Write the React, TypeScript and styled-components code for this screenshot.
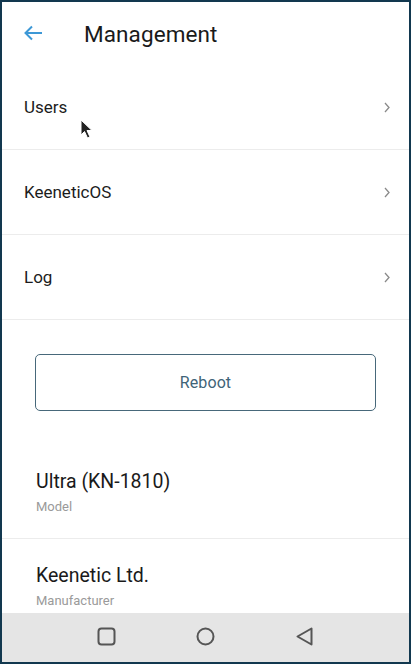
import React from 'react'
import styled, { createGlobalStyle } from 'styled-components'

const GlobalStyle = createGlobalStyle`
  html, body {
    margin: 0;
    padding: 0;
    background: #12384f;
  }
  body {
    font-family: Roboto, "Noto Sans", "Liberation Sans", sans-serif;
  }
`

const Frame = styled.div`
  position: relative;
  width: 411px;
  height: 664px;
  box-sizing: border-box;
  border: 2px solid #12384f;
  background: #fff;
  display: flex;
  flex-direction: column;
  overflow: hidden;
`

const Content = styled.div`
  flex: 1;
  overflow: hidden;
  display: flex;
  flex-direction: column;
`

const Header = styled.div`
  height: 63px;
  flex-shrink: 0;
  display: flex;
  align-items: center;
  padding-left: 21px;
`

const BackButton = styled.button`
  border: none;
  background: none;
  padding: 0;
  width: 20px;
  height: 16px;
  display: flex;
  margin-top: -2px;
  cursor: pointer;
`

const Title = styled.h1`
  margin: 0 0 0 41px;
  font-size: 22.5px;
  font-weight: 400;
  color: #1a1a1a;
  letter-spacing: 0.1px;
`

const Row = styled.div`
  height: 84px;
  flex-shrink: 0;
  display: flex;
  align-items: center;
  justify-content: space-between;
  padding: 0 18px 0 22px;
  border-bottom: 1.5px solid #ececec;
  font-size: 17px;
  color: #1c1c1c;
`

const ButtonArea = styled.div`
  flex-shrink: 0;
  padding: 34px 33px;
`

const OutlineButton = styled.button`
  width: 100%;
  height: 57px;
  box-sizing: border-box;
  border: 1.5px solid #47687a;
  border-radius: 5px;
  background: #fff;
  color: #3f6478;
  font-family: Roboto, "Noto Sans", sans-serif;
  font-size: 16px;
  letter-spacing: 0.1px;
`

const InfoItem = styled.div<{ $last?: boolean }>`
  flex-shrink: 0;
  padding: 24px 34px 22px 34px;
  border-bottom: ${(p) => (p.$last ? 'none' : '1.5px solid #ececec')};
`

const InfoValue = styled.div`
  font-size: 19.5px;
  line-height: 26px;
  color: #1a1a1a;
`

const InfoLabel = styled.div`
  margin-top: 3px;
  font-size: 13px;
  line-height: 18px;
  color: #9a9a9a;
`

const NavBar = styled.div`
  height: 49px;
  flex-shrink: 0;
  background: #e5e5e5;
  display: flex;
  align-items: center;
  justify-content: center;
  gap: 78px;
  padding-bottom: 2px;
  box-sizing: border-box;
`

const NavIcon = styled.svg`
  width: 21px;
  height: 21px;
  display: block;
`

const Cursor = styled.svg`
  position: absolute;
  left: 78px;
  top: 117px;
  width: 14px;
  height: 21px;
`

const Chevron = () => (
  <svg width="8" height="11" viewBox="0 0 8 11">
    <path d="M2 1 L6 5.5 L2 10" fill="none" stroke="#8a8a8a" strokeWidth="1.3" />
  </svg>
)

const menu = ['Users', 'KeeneticOS', 'Log']

const info = [
  { value: 'Ultra (KN-1810)', label: 'Model' },
  { value: 'Keenetic Ltd.', label: 'Manufacturer' },
]

export default function App() {
  return (
    <>
      <GlobalStyle />
      <Frame>
        <Content>
          <Header>
            <BackButton aria-label="Back">
              <svg width="20" height="16" viewBox="0 0 20 16">
                <path
                  d="M19 8 H2.5 M9 1.5 L2.5 8 L9 14.5"
                  fill="none"
                  stroke="#3d98d6"
                  strokeWidth="2"
                />
              </svg>
            </BackButton>
            <Title>Management</Title>
          </Header>
          {menu.map((m) => (
            <Row key={m}>
              <span>{m}</span>
              <Chevron />
            </Row>
          ))}
          <ButtonArea>
            <OutlineButton>Reboot</OutlineButton>
          </ButtonArea>
          {info.map((it, i) => (
            <InfoItem key={it.value} $last={i === info.length - 1}>
              <InfoValue>{it.value}</InfoValue>
              <InfoLabel>{it.label}</InfoLabel>
            </InfoItem>
          ))}
        </Content>
        <NavBar>
          <NavIcon viewBox="0 0 21 21">
            <rect x="2.5" y="2.5" width="16" height="16" rx="3" fill="none" stroke="#555" strokeWidth="2" />
          </NavIcon>
          <NavIcon viewBox="0 0 21 21">
            <circle cx="10.5" cy="10.5" r="8" fill="none" stroke="#555" strokeWidth="2" />
          </NavIcon>
          <NavIcon viewBox="0 0 21 21">
            <path d="M17.5 2.5 L17.5 18.5 L3.5 10.5 Z" fill="none" stroke="#555" strokeWidth="2" strokeLinejoin="round" />
          </NavIcon>
        </NavBar>
        <Cursor viewBox="0 0 14 21">
          <path
            d="M1 1 L1 16 L4.5 12.5 L7.5 19 L10 18 L7 11.5 L12 11.5 Z"
            fill="#222"
            stroke="#fff"
            strokeWidth="1"
            strokeLinejoin="round"
          />
        </Cursor>
      </Frame>
    </>
  )
}
